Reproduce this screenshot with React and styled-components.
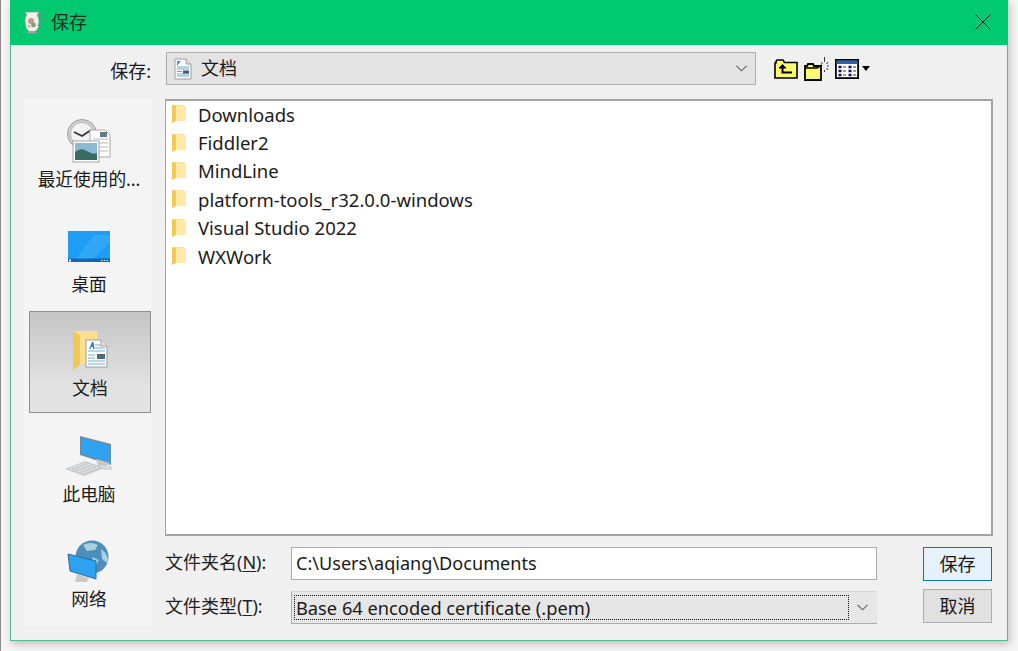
import React from 'react';
import styled, { createGlobalStyle } from 'styled-components';

const GlobalStyle = createGlobalStyle`
  html, body {
    margin: 0;
    padding: 0;
    background: #f4f4f4;
    font-family: "Noto Sans", "Noto Sans CJK SC", sans-serif;
    color: #1a1a1a;
    overflow: hidden;
  }
`;

const Page = styled.div`
  width: 1018px;
  height: 651px;
  padding-left: 10px;
  box-sizing: border-box;
  border-left: 1px solid #8c8c8c;
  background: #f5f5f5;
`;

const Dialog = styled.div`
  width: 998px;
  height: 641px;
  margin-left: -1px;
  box-sizing: border-box;
  display: flex;
  flex-direction: column;
  background: #f0f0f0;
  border: 1px solid #4fc08d;
  border-top: 0;
  box-shadow: 2px 3px 8px rgba(0, 0, 0, 0.22);
`;

const TitleBar = styled.div`
  height: 45px;
  margin: 0 -1px;
  flex: none;
  display: flex;
  align-items: center;
  padding: 0 14px 1px 13px;
  box-sizing: border-box;
  background: #00c96f;
`;

const TitleText = styled.span`
  font-size: 18px;
  margin-left: 6px;
  color: #12301f;
  line-height: 24px;
  padding-bottom: 1px;
`;

const CloseButton = styled.div`
  margin-left: auto;
  width: 16px;
  height: 16px;
  margin-right: 3px;
  display: flex;
`;

const Toolbar = styled.div`
  height: 54px;
  flex: none;
  display: flex;
  align-items: center;
  padding-bottom: 7px;
  box-sizing: border-box;
`;

const LookLabel = styled.label`
  width: 140px;
  text-align: right;
  font-size: 18px;
  margin-right: 15px;
  position: relative;
  top: 1px;
`;

const LookSelect = styled.div`
  width: 590px;
  height: 33px;
  box-sizing: border-box;
  display: flex;
  align-items: center;
  padding: 0 8px 0 7px;
  background: #e3e3e3;
  border: 1px solid #adadad;
  font-size: 18px;
`;

const LookText = styled.span`
  margin-left: 9px;
  flex: 1;
  line-height: 24px;
  padding-bottom: 1px;
`;

const ToolIcons = styled.div`
  display: flex;
  align-items: center;
  margin-left: 18px;
  gap: 6px;
`;

const Content = styled.div`
  flex: 1;
  display: flex;
  padding-left: 13px;
  min-height: 0;
`;

const Sidebar = styled.div`
  width: 128px;
  height: 526px;
  flex: none;
  display: flex;
  flex-direction: column;
  background: #f4f4f4;
`;

const PlaceItem = styled.div`
  height: ${({ $h }) => $h}px;
  flex: none;
  display: flex;
  flex-direction: column;
  align-items: center;
  justify-content: flex-start;
  box-sizing: border-box;
  padding-top: ${({ $top }) => $top}px;
  padding-left: 2px;
  font-size: 17.7px;
  ${({ $active }) =>
    $active &&
    `
    margin-left: 5px;
    margin-right: 1px;
    padding-left: 0;
    background: linear-gradient(#c5c5c5, #e2e2e2 75%);
    border: 1px solid #8f8f8f;
  `}
`;

const PlaceLabel = styled.span`
  margin-top: ${({ $gap }) => $gap}px;
  line-height: 24px;
  white-space: nowrap;
  color: #1a1a1a;
`;

const RightColumn = styled.div`
  margin-left: 13px;
  width: 828px;
  display: flex;
  flex-direction: column;
`;

const FileList = styled.div`
  height: 437px;
  flex: none;
  box-sizing: border-box;
  background: #fff;
  border: 2px solid #a3a3a3;
  border-left-width: 1px;
`;

const FileRow = styled.div`
  height: 28.4px;
  box-sizing: border-box;
  display: flex;
  align-items: center;
  padding: 0 0 2px 5px;
  font-size: 18.5px;
  color: #1b1b1b;
`;

const FileName = styled.span`
  margin-left: 11px;
`;

const Footer = styled.div`
  display: flex;
  padding-top: 11px;
`;

const Fields = styled.div`
  width: 712px;
  display: flex;
  flex-direction: column;
  gap: 11px;
`;

const FieldRow = styled.div`
  display: flex;
  align-items: center;
  height: 33px;
`;

const FieldLabel = styled.label`
  width: 126px;
  flex: none;
  font-size: 18px;
  line-height: 24px;
  padding-bottom: ${({ $lift }) => $lift}px;
  color: #1f1f1f;
`;

const Mnemonic = styled.span`
  text-decoration: underline;
  text-underline-offset: 2px;
`;

const TextInput = styled.div`
  width: 586px;
  height: 33px;
  box-sizing: border-box;
  display: flex;
  align-items: center;
  padding: 0 0 1px 4px;
  background: #fff;
  border: 1px solid #acacac;
  font-size: 18.1px;
  white-space: nowrap;
`;

const Combo = styled.div`
  width: 586px;
  height: 33px;
  box-sizing: border-box;
  display: flex;
  align-items: center;
  padding: 3px 0 3px 2px;
  background: #e6e6e6;
  border-top: 1px solid #d8d8d8;
  border-bottom: 1px solid #adadad;
  border-left: 1px solid #adadad;
`;

const ComboValue = styled.div`
  width: 555px;
  height: 100%;
  box-sizing: border-box;
  display: flex;
  align-items: center;
  padding-left: 1px;
  border: 1px dotted #111;
  font-size: 18.25px;
  white-space: nowrap;
`;

const ComboArrow = styled.div`
  flex: 1;
  display: flex;
  justify-content: center;
  padding-right: 2px;
`;

const Buttons = styled.div`
  margin-left: 46px;
  width: 69px;
  display: flex;
  flex-direction: column;
  gap: 8px;
`;

const DialogButton = styled.button`
  height: 34px;
  padding: 0 0 2px;
  box-sizing: border-box;
  font-family: inherit;
  font-size: 18px;
  color: #1a1a1a;
  background: ${({ $primary }) => ($primary ? '#e5f1fb' : '#e1e1e1')};
  border: 1px solid ${({ $primary }) => ($primary ? '#0078b8' : '#adadad')};
`;

const CaretIcon = styled.svg`
  margin-left: -3px;
`;

const Chevron = () => (
  <svg width="11" height="7" viewBox="0 0 11 7" fill="none">
    <path d="M0.5 0.8L5.5 5.8L10.5 0.8" stroke="#606060" strokeWidth="1.1" />
  </svg>
);

const FolderSmall = () => (
  <svg width="16" height="20" viewBox="0 0 16 20">
    <path d="M1 1H12L15 3V17H3L1 19Z" fill="#fde08a" />
    <path d="M1 1L5 2V17L1 19Z" fill="#f5c84f" />
    <path d="M5 2H15V17H5Z" fill="#fee9a8" />
  </svg>
);

const JugIcon = () => (
  <svg width="22" height="24" viewBox="0 0 22 24">
    <path d="M2 2H16L14.5 5Q17 10 15.5 17Q14 22 9 22Q4 22 2.5 16Q1 9 3.5 5Z" fill="#eef0ea" stroke="#8f948e" strokeWidth="0.8" />
    <path d="M15 5H20.5V9Q19 13 15 16" fill="none" stroke="#5f9585" strokeWidth="1.4" />
    <circle cx="8" cy="11" r="3" fill="#cf8f8a" />
    <circle cx="10.5" cy="15" r="2.4" fill="#7da37e" />
    <circle cx="6" cy="16" r="1.6" fill="#d7b7a0" />
    <ellipse cx="9" cy="22.5" rx="5" ry="1.2" fill="#9c9c9c" />
  </svg>
);

const DocIcon = () => (
  <svg width="18" height="22" viewBox="0 0 18 22">
    <path d="M1 1H12L17 6V21H1Z" fill="#fff" stroke="#9c9c9c" />
    <path d="M12 1V6H17" fill="#e4e4e4" stroke="#9c9c9c" />
    <path d="M3 3L7 3L3 8Z" fill="#3a9bd8" />
    <path d="M3 9H15M3 11H15M3 16H15M3 18H15" stroke="#6fa8c9" />
    <rect x="9" y="12.5" width="6" height="3" fill="#405a6e" />
    <path d="M3 13.5H8" stroke="#6fa8c9" />
  </svg>
);

const FolderUpIcon = () => (
  <svg width="24" height="20" viewBox="0 0 24 20">
    <path d="M2 4V2.5L3 1H9L10.5 3.5H23V19H1V4Z" fill="#fbfb72" stroke="#000" strokeWidth="1.6" />
    <path d="M6 8H11M8.5 5.5L5 9H12Z" fill="#000" stroke="#000" />
    <path d="M8.5 8V13.5H18" fill="none" stroke="#000" strokeWidth="2" />
  </svg>
);

const FolderNewIcon = () => (
  <svg width="25" height="24" viewBox="0 0 25 24">
    <path d="M1 9H3L4 7H9L10 9H17V23H1Z" fill="#fbfb72" stroke="#000" strokeWidth="1.8" />
    <path d="M1 11H13L18 8" fill="none" stroke="#000" strokeWidth="1.6" />
    <path d="M20.5 0V5M20.5 13V15M15.5 9H18M23 9H25M17 5L18.5 7M24 5L22.5 7M24 13L22.5 11" stroke="#222" strokeWidth="0.9" />
  </svg>
);

const ViewsIcon = () => (
  <svg width="24" height="20" viewBox="0 0 24 20">
    <rect x="0.9" y="0.9" width="22.2" height="18.2" fill="#fff" stroke="#000" strokeWidth="1.8" />
    <rect x="1.5" y="1.5" width="21" height="3.5" fill="#2a63ad" />
    <path d="M3.5 8H6.5M3.5 12H6.5M3.5 16H6.5M13.5 8H16.5M13.5 12H16.5M13.5 16H16.5" stroke="#12127a" strokeWidth="2.6" />
    <path d="M8 8H11M8 12H11M8 16H11M18 8H21M18 12H21M18 16H21" stroke="#333" strokeWidth="1.1" />
  </svg>
);

const DropCaret = () => (
  <CaretIcon width="8" height="5" viewBox="0 0 8 5">
    <path d="M0 0H8L4 5Z" fill="#000" />
  </CaretIcon>
);

const RecentIcon = () => (
  <svg width="44" height="44" viewBox="0 0 44 44">
    <circle cx="15" cy="15" r="14.5" fill="#cfcfcf" stroke="#9d9d9d" />
    <circle cx="15" cy="15" r="11.5" fill="#f3f3f3" stroke="#b5b5b5" />
    <path d="M7 13L15 17L24 11" fill="none" stroke="#333" strokeWidth="1.8" />
    <path d="M23 11H38L43 16V38H23Z" fill="#fff" stroke="#a8a8a8" />
    <path d="M26 20H41M26 24H41M26 28H41M26 32H41" stroke="#b8b8b8" />
    <rect x="33" y="13" width="7" height="5" fill="#607a8a" />
    <rect x="6" y="22" width="26" height="21" fill="#fff" stroke="#a3a3a3" />
    <rect x="8" y="24" width="22" height="17" fill="#8bbad4" />
    <path d="M8 33Q14 28 20 32T30 34V41H8Z" fill="#3a6b62" />
  </svg>
);

const DesktopIcon = () => (
  <svg width="42" height="31" viewBox="0 0 42 31">
    <rect width="42" height="31" fill="#1f9df5" />
    <path d="M8 28L26 4H42V12L24 28Z" fill="#48b4fb" opacity="0.45" />
    <rect y="27.5" width="42" height="3.5" fill="#0b6bb0" />
    <rect x="1" y="28.5" width="2" height="2" fill="#fff" />
    <path d="M33 29.5H41" stroke="#fff" strokeDasharray="1.4 1.4" />
  </svg>
);

const DocumentsIcon = () => (
  <svg width="36" height="42" viewBox="0 0 36 42">
    <path d="M1 1H25V34H6L1 40Z" fill="#fce08d" />
    <path d="M1 1L8 5V35L1 40Z" fill="#f3c659" />
    <path d="M14 10H29L35 16V37H14Z" fill="#fff" stroke="#9e9e9e" />
    <path d="M29 10V16H35" fill="#e8e8e8" stroke="#9e9e9e" />
    <path d="M17 19L20 12H21.5L22.5 19H21L20.8 17H19L18.4 19Z" fill="#2f7fc9" />
    <path d="M23 15H29M23 18H33M16 21H33M16 31H33M16 34H33M16 25H23M16 28H23" stroke="#6fb0d6" />
    <rect x="25" y="24" width="8" height="5" fill="#4c6a7a" />
  </svg>
);

const ComputerIcon = () => (
  <svg width="50" height="42" viewBox="0 0 50 42">
    <path d="M16 1L47 9V30L16 20Z" fill="#6f8a9b" />
    <path d="M17 3L46 10.5V27.5L17 18.5Z" fill="#2fa3f2" />
    <path d="M32 24L34 31H42L46 28Z" fill="#c4c9cc" />
    <path d="M1 34L21 26L41 33L20 41Z" fill="#c9cccd" />
    <path d="M6 34L22 27.5M10 35.5L26 29M14 37L30 30.5M18 38.5L34 32" stroke="#f2f2f2" strokeDasharray="2 1" />
    <path d="M39 31H48V35H39Z" fill="#d8d8d8" />
  </svg>
);

const NetworkIcon = () => (
  <svg width="44" height="42" viewBox="0 0 44 42">
    <circle cx="25" cy="17" r="16.5" fill="#4b8fba" />
    <path d="M16 5Q24 1 31 5L28 10L20 11ZM34 9Q42 14 41 24L35 19ZM25 17L32 20L28 27Z" fill="#a8cfe2" />
    <path d="M1 14L29 21V39L3 31Z" fill="#2da2f0" stroke="#2c6e9c" />
    <path d="M10 34L22 38L20 42H8Z" fill="#c9c9c9" />
  </svg>
);

const FOLDERS = [
  'Downloads',
  'Fiddler2',
  'MindLine',
  'platform-tools_r32.0.0-windows',
  'Visual Studio 2022',
  'WXWork',
];

const App = () => (
  <>
    <GlobalStyle />
    <Page>
      <Dialog>
        <TitleBar>
          <JugIcon />
          <TitleText>保存</TitleText>
          <CloseButton>
            <svg width="16" height="16" viewBox="0 0 16 16">
              <path d="M0.5 0.5L15.5 15.5M15.5 0.5L0.5 15.5" stroke="#123" strokeWidth="1" />
            </svg>
          </CloseButton>
        </TitleBar>
        <Toolbar>
          <LookLabel>保存:</LookLabel>
          <LookSelect>
            <DocIcon />
            <LookText>文档</LookText>
            <Chevron />
          </LookSelect>
          <ToolIcons>
            <FolderUpIcon />
            <FolderNewIcon />
            <ViewsIcon />
            <DropCaret />
          </ToolIcons>
        </Toolbar>
        <Content>
          <Sidebar>
            <PlaceItem $h={105} $top={20}>
              <RecentIcon />
              <PlaceLabel $gap={4}>最近使用的...</PlaceLabel>
            </PlaceItem>
            <PlaceItem $h={107} $top={27}>
              <DesktopIcon />
              <PlaceLabel $gap={10}>桌面</PlaceLabel>
            </PlaceItem>
            <PlaceItem $h={102} $top={18} $active>
              <DocumentsIcon />
              <PlaceLabel $gap={4}>文档</PlaceLabel>
            </PlaceItem>
            <PlaceItem $h={105} $top={22}>
              <ComputerIcon />
              <PlaceLabel $gap={5}>此电脑</PlaceLabel>
            </PlaceItem>
            <PlaceItem $h={105} $top={22}>
              <NetworkIcon />
              <PlaceLabel $gap={5}>网络</PlaceLabel>
            </PlaceItem>
          </Sidebar>
          <RightColumn>
            <FileList>
              {FOLDERS.map((name) => (
                <FileRow key={name}>
                  <FolderSmall />
                  <FileName>{name}</FileName>
                </FileRow>
              ))}
            </FileList>
            <Footer>
              <Fields>
                <FieldRow>
                  <FieldLabel $lift={3}>文件夹名(<Mnemonic>N</Mnemonic>):</FieldLabel>
                  <TextInput>C:\Users\aqiang\Documents</TextInput>
                </FieldRow>
                <FieldRow>
                  <FieldLabel $lift={3}>文件类型(<Mnemonic>T</Mnemonic>):</FieldLabel>
                  <Combo>
                    <ComboValue>Base 64 encoded certificate (.pem)</ComboValue>
                    <ComboArrow>
                      <Chevron />
                    </ComboArrow>
                  </Combo>
                </FieldRow>
              </Fields>
              <Buttons>
                <DialogButton $primary>保存</DialogButton>
                <DialogButton>取消</DialogButton>
              </Buttons>
            </Footer>
          </RightColumn>
        </Content>
      </Dialog>
    </Page>
  </>
);

export default App;
